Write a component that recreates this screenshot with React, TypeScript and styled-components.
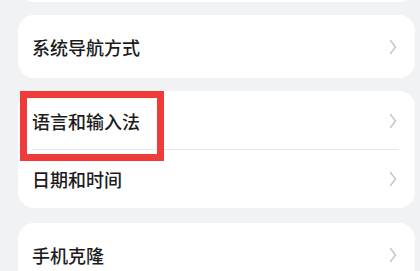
import styled, { createGlobalStyle } from 'styled-components';

const GlobalStyle = createGlobalStyle`
  html, body {
    margin: 0;
    padding: 0;
    background: #f1f2f4;
  }
  body {
    font-family: "Noto Sans CJK SC", "Noto Sans", sans-serif;
  }
`;

const Page = styled.div`
  position: relative;
  width: 420px;
  height: 271px;
  overflow: hidden;
  padding: 0 5px 0 18px;
  box-sizing: border-box;
  display: flex;
  flex-direction: column;
  gap: 13px;
`;

const Card = styled.div`
  background: #ffffff;
  border-radius: 16px;
  display: flex;
  flex-direction: column;
  flex-shrink: 0;
`;

const TopCard = styled(Card)`
  height: 60px;
  margin-top: -58px;
`;

const LastCard = styled(Card)`
  margin-top: 2px;
`;

const Row = styled.div<{ $height: number; $divider?: boolean }>`
  height: ${(p) => p.$height}px;
  display: flex;
  align-items: center;
  justify-content: space-between;
  padding: 0 18px 0 14px;
  box-sizing: border-box;
  position: relative;

  ${(p) =>
    p.$divider &&
    `
    &::after {
      content: '';
      position: absolute;
      left: 14px;
      right: 16px;
      bottom: 0;
      height: 1px;
      background: #e6e7e9;
    }
  `}
`;

const Label = styled.span`
  font-size: 18px;
  font-weight: 500;
  color: #1c1c1c;
  line-height: 1;
`;

const Chevron = () => (
  <svg width="8" height="16" viewBox="0 0 8 16" fill="none">
    <path
      d="M1.5 1.5 L6.5 8 L1.5 14.5"
      stroke="#c4c5c8"
      strokeWidth="1.4"
      strokeLinecap="round"
      strokeLinejoin="round"
    />
  </svg>
);

const Highlight = styled.div`
  position: absolute;
  left: 20px;
  top: 91px;
  width: 144px;
  height: 70px;
  border: 7px solid #f03b3b;
  box-sizing: border-box;
  pointer-events: none;
`;

const Item = ({ label, height, divider }: { label: string; height: number; divider?: boolean }) => (
  <Row $height={height} $divider={divider}>
    <Label>{label}</Label>
    <Chevron />
  </Row>
);

export default function App() {
  return (
    <>
      <GlobalStyle />
      <Page>
        <TopCard />
        <Card>
          <Item label="系统导航方式" height={63} />
        </Card>
        <Card>
          <Item label="语言和输入法" height={59} divider />
          <Item label="日期和时间" height={58} />
        </Card>
        <LastCard>
          <Item label="手机克隆" height={63} />
        </LastCard>
        <Highlight />
      </Page>
    </>
  );
}
